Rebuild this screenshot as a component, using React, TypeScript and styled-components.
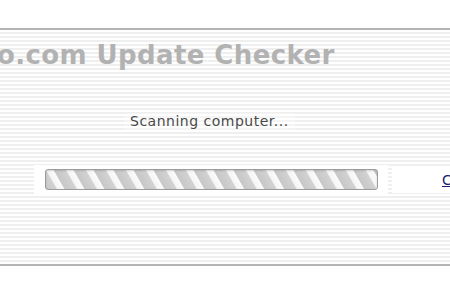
import * as React from "react"
import styled, { createGlobalStyle } from "styled-components"

const Global = createGlobalStyle`
  html, body {
    margin: 0;
    padding: 0;
    background: #ffffff;
    overflow: hidden;
  }
  body {
    width: 450px;
    height: 300px;
  }
`

const Panel = styled.div`
  margin-top: 28px;
  height: 234px;
  width: 450px;
  overflow: hidden;
  border-top: 2px solid #b4b4b4;
  border-bottom: 2px solid #b4b4b4;
  background: repeating-linear-gradient(
    to bottom,
    #ffffff 0px,
    #ffffff 2px,
    #efefef 2px,
    #efefef 4px
  );
  display: flex;
  flex-direction: column;
`

const Title = styled.h1`
  margin: 10px 0 0 -3px;
  font-family: "DejaVu Sans", Verdana, sans-serif;
  font-weight: bold;
  font-size: 26px;
  line-height: 31px;
  color: #b2b2b2;
  white-space: nowrap;
  letter-spacing: 0.4px;
`

const StatusRow = styled.div`
  margin-top: 42px;
  display: flex;
  padding-left: 124px;
`

const StatusText = styled.span`
  padding: 0 6px;
  background: rgba(255, 255, 255, 0.35);
  font-family: "DejaVu Sans", Verdana, sans-serif;
  font-size: 14px;
  line-height: 17px;
  color: #4a4a4a;
  letter-spacing: 0.5px;
  white-space: nowrap;
`

const ProgressRow = styled.div`
  margin-top: 35px;
  display: flex;
  align-items: center;
  padding-left: 34px;
`

const BarWell = styled.div`
  padding: 4px 10px 4px 11px;
  background: #ffffff;
`

const Bar = styled.div`
  width: 331px;
  height: 19px;
  border: 1px solid #9c9c9c;
  border-radius: 3px;
  box-sizing: content-box;
  background: repeating-linear-gradient(
    60deg,
    #c8c8c8 0px,
    #d2d2d2 9px,
    #f5f5f5 10px,
    #fbfbfb 15.5px,
    #c8c8c8 16.5px,
    #c8c8c8 17.3px
  );
  box-shadow: inset 0 1px 2px rgba(0, 0, 0, 0.15);
`

const LinkBox = styled.div`
  margin-left: 4px;
  padding: 4px 0 4px 50px;
  background: #ffffff;
  white-space: nowrap;
`

const Link = styled.a`
  font-family: "DejaVu Sans", Verdana, sans-serif;
  font-size: 14px;
  line-height: 17px;
  color: #1c1c6e;
  text-decoration: underline;
`

export default function App() {
  return (
    <>
      <Global />
      <Panel>
        <Title>o.com Update Checker</Title>
        <StatusRow>
          <StatusText>Scanning computer...</StatusText>
        </StatusRow>
        <ProgressRow>
          <BarWell>
            <Bar />
          </BarWell>
          <LinkBox>
            <Link href="#">Cancel</Link>
          </LinkBox>
        </ProgressRow>
      </Panel>
    </>
  )
}
